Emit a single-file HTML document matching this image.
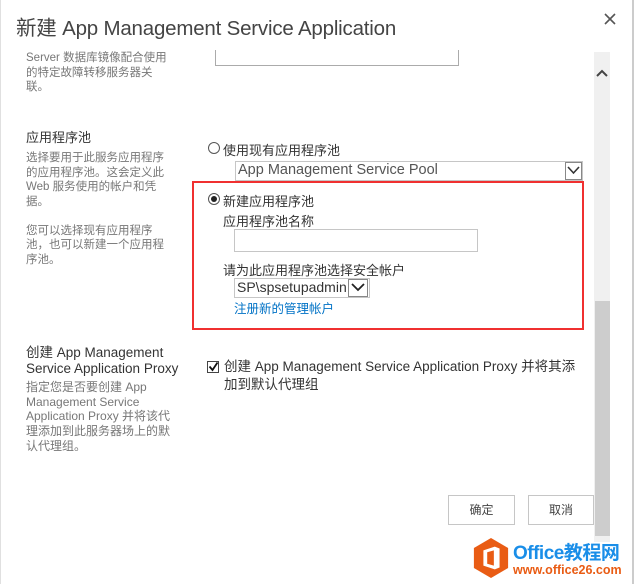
<!DOCTYPE html>
<html><head><meta charset="utf-8"><style>
*{margin:0;padding:0;box-sizing:border-box}
body{width:634px;height:584px;overflow:hidden;background:#fff;font-family:"Liberation Sans","Noto Sans CJK SC",sans-serif;position:relative;color:#444}
.a{position:absolute;white-space:nowrap}
.d{font-size:11.5px;color:#777;line-height:14.5px;white-space:normal}
.h{font-size:13px;color:#333}
.t{font-size:13px;color:#333}
.radio{position:absolute;width:12px;height:12px;border:1px solid #555;border-radius:50%;background:#fff}
.box{position:absolute;border:1px solid #ababab;background:#fff}
</style></head><body>
<div style="position:absolute;left:0;top:0;width:634px;height:584px;border-right:2px solid #ccc;border-left:1px solid #e0e0e0"></div>
<div class="a" style="left:16px;top:11px;font-size:20.5px;color:#444;letter-spacing:-0.2px">新建 App Management Service Application</div>
<svg class="a" style="left:604px;top:13px" width="12" height="12"><path d="M1 1L11 11M11 1L1 11" stroke="#555" stroke-width="1.6"/></svg>
<div class="a d" style="left:26px;top:51px;width:150px">Server 数据库镜像配合使用<br>的特定故障转移服务器关<br>联。</div>
<div class="box" style="left:215px;top:50px;width:244px;height:16px;border-top:none"></div>
<div class="a" style="left:594px;top:52px;width:16px;height:490px;background:#f0f0f0"></div>
<div class="a" style="left:595px;top:301px;width:15px;height:235px;background:#cdcdcd"></div>
<svg class="a" style="left:596px;top:68px" width="12" height="10"><path d="M1 8L6 3L11 8" stroke="#444" stroke-width="2" fill="none"/></svg>
<div class="a h" style="left:26px;top:127px">应用程序池</div>
<div class="a d" style="left:26px;top:151px;width:145px">选择要用于此服务应用程序的应用程序池。这会定义此 Web 服务使用的帐户和凭据。<br><br>您可以选择现有应用程序池，也可以新建一个应用程序池。</div>
<div class="radio" style="left:208px;top:142px"></div>
<div class="a t" style="left:223px;top:140px">使用现有应用程序池</div>
<div class="box" style="left:235px;top:161px;width:348px;height:20px;border-color:#c6c6c6"></div>
<div class="a" style="left:238px;top:162px;font-size:14.5px;color:#555">App Management Service Pool</div>
<div class="box" style="left:565px;top:162px;width:17px;height:18px;border-color:#888"></div>
<svg class="a" style="left:567px;top:166px" width="13" height="9"><path d="M1 1L6.5 7L12 1" stroke="#333" stroke-width="1.6" fill="none"/></svg>
<div class="a" style="left:192px;top:181px;width:392px;height:149px;border:2px solid #f03030"></div>
<div class="radio" style="left:208px;top:193px"><div style="position:absolute;left:2px;top:2px;width:6px;height:6px;border-radius:50%;background:#222"></div></div>
<div class="a t" style="left:223px;top:191px">新建应用程序池</div>
<div class="a t" style="left:223px;top:211px">应用程序池名称</div>
<div class="box" style="left:234px;top:229px;width:244px;height:23px;border-color:#c6c6c6"></div>
<div class="a t" style="left:223px;top:260px">请为此应用程序池选择安全帐户</div>
<div class="box" style="left:234px;top:278px;width:136px;height:20px;border-color:#c6c6c6"></div>
<div class="a" style="left:237px;top:279px;font-size:14px;color:#333">SP\spsetupadmin</div>
<div class="box" style="left:348px;top:279px;width:20px;height:18px;border-color:#888"></div>
<svg class="a" style="left:351px;top:283px" width="14" height="9"><path d="M1 1L7 7L13 1" stroke="#222" stroke-width="1.8" fill="none"/></svg>
<div class="a" style="left:234px;top:298px;font-size:12.5px;color:#0072c6">注册新的管理帐户</div>
<div class="a h" style="left:26px;top:345px;line-height:16px;font-size:13.5px">创建 App Management<br>Service Application Proxy</div>
<div class="a d" style="left:26px;top:380px;width:150px;font-size:12px;line-height:14.7px">指定您是否要创建 App Management Service Application Proxy 并将该代理添加到此服务器场上的默认代理组。</div>
<div class="a" style="left:207px;top:361px;width:12px;height:12px;border:1px solid #444;background:#fff"></div>
<svg class="a" style="left:208px;top:361px" width="11" height="11"><path d="M1.5 5.5L4.5 9L9.5 1.5" stroke="#111" stroke-width="1.8" fill="none"/></svg>
<div class="a t" style="left:224px;top:358px;line-height:18px;font-size:13.5px">创建 App Management Service Application Proxy 并将其添<br>加到默认代理组</div>
<div class="box" style="left:448px;top:495px;width:67px;height:30px;border-color:#c6c6c6;font-size:12px;color:#444;text-align:center;line-height:28px">确定</div>
<div class="box" style="left:528px;top:495px;width:66px;height:30px;border-color:#c6c6c6;font-size:12px;color:#444;text-align:center;line-height:28px">取消</div>
<svg class="a" style="left:472px;top:537px" width="38" height="42" viewBox="0 0 40 44"><path d="M20 1L38 11.5V32.5L20 43L2 32.5V11.5Z" fill="#e95c14"/><path d="M12 14L24 10L29 12V32L24 34L12 30Z" fill="#fff"/><path d="M16 16L23 14V30L16 28Z" fill="#e95c14"/></svg>
<div class="a" style="left:513px;top:538px;font-size:19px;font-weight:bold;color:#1a8ee8;letter-spacing:-0.5px">Office教程网</div>
<div class="a" style="left:513px;top:563px;font-size:12.5px;font-weight:bold;color:#e95c14">www.office26.com</div>
</body></html>
